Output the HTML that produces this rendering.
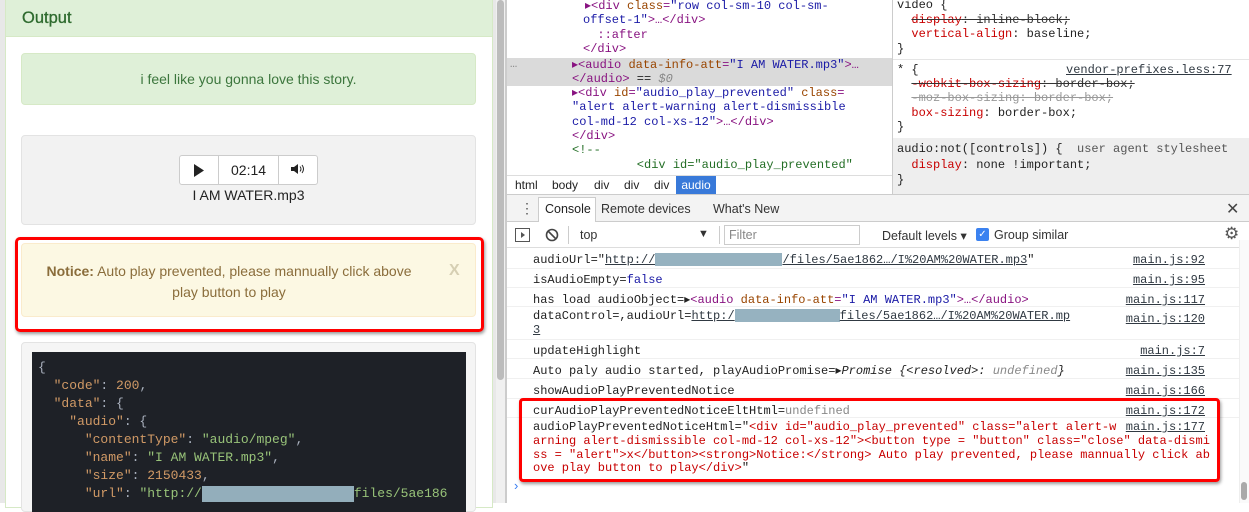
<!DOCTYPE html>
<html><head><meta charset="utf-8"><style>
*{box-sizing:border-box;margin:0;padding:0}
body{width:1249px;height:503px;overflow:hidden;position:relative;background:#fff;font-family:"Liberation Sans",sans-serif}
.a{position:absolute;white-space:pre}
.m{font-family:"Liberation Mono",monospace;font-size:12px;line-height:14px}
.e{font-family:"Liberation Mono",monospace;font-size:12px;line-height:14.3px}
.tag{color:#881280}.at{color:#994500}.av{color:#1a1aa6}.cm{color:#236e25}.pr{color:#c80000}
.st{text-decoration:line-through;color:#333}
.lk{text-decoration:underline;color:#303942}
.blur{background:#96b2c0;display:inline-block;height:13px;vertical-align:middle}
.c{font-family:"Liberation Mono",monospace;font-size:13px;line-height:18px;color:#abb2bf}
.k{color:#d19a66}.s{color:#98c379}
</style></head><body>
<!-- left page -->
<div class="a" style="left:0;top:0;width:505px;height:503px;background:#e8e8e8"></div>
<div class="a" style="left:5px;top:-2px;width:488px;height:510px;background:#fff;border:1px solid #d6e9c6"></div>
<div class="a" style="left:6px;top:0;width:486px;height:37px;background:#dff0d8;border-bottom:1px solid #d6e9c6"></div>
<div class="a" style="left:22px;top:9px;font-size:16.5px;color:#2f6b2f;-webkit-text-stroke:0.3px #2f6b2f">Output</div>
<div class="a" style="left:21px;top:53px;width:455px;height:52px;background:#dff0d8;border:1px solid #d6e9c6;border-radius:4px;color:#3c763d;font-size:14px;text-align:center;line-height:50px">i feel like you gonna love this story.</div>
<div class="a" style="left:21px;top:135px;width:455px;height:90px;background:#f2f2f2;border:1px solid #e3e3e3;border-radius:4px"></div>
<div class="a" style="left:179px;top:155px;width:139px;height:30px;background:#fff;border:1px solid #ccc;border-radius:3px"></div>
<div class="a" style="left:218px;top:155px;width:1px;height:30px;background:#ccc"></div>
<div class="a" style="left:278px;top:155px;width:1px;height:30px;background:#ccc"></div>
<svg class="a" style="left:193px;top:164px" width="12" height="13"><path d="M1 0L11 6.5L1 13Z" fill="#222"/></svg>
<div class="a" style="left:231px;top:162px;font-size:14px;color:#222">02:14</div>
<svg class="a" style="left:290px;top:163px" width="16" height="12"><path d="M1 4H4L8 1V11L4 8H1Z" fill="#222"/><path d="M10 3.5Q12 6 10 8.5M12 2Q15 6 12 10" stroke="#222" fill="none"/></svg>
<div class="a" style="left:0;width:497px;top:187px;text-align:center;font-size:14px;color:#222">I AM WATER.mp3</div>
<div class="a" style="left:15px;top:237px;width:469px;height:95px;border:3px solid #f00;border-radius:5px;box-shadow:1px 2px 3px rgba(0,0,0,.4)"></div>
<div class="a" style="left:21px;top:243px;width:455px;height:74px;background:#fcf8e3;border:1px solid #faebcc;border-radius:4px"></div>
<div class="a" style="left:21px;top:261px;width:455px;text-align:center;font-size:14px;line-height:21px;color:#8a6d3b;padding:0 43px 0 4px"><b>Notice:</b> Auto play prevented, please mannually click above<br>play button to play</div>
<div class="a" style="left:449px;top:262px;font-size:16px;font-weight:bold;color:#d6cfb3">X</div>
<div class="a" style="left:21px;top:342px;width:455px;height:170px;background:#f5f5f5;border:1px solid #e3e3e3;border-radius:4px"></div>
<div class="a c" style="left:32px;top:352px;width:434px;height:160px;background:#1e2127;padding:7px 0 0 6px">{
  <span class="k">"code"</span>: <span class="k">200</span>,
  <span class="k">"data"</span>: {
    <span class="k">"audio"</span>: {
      <span class="k">"contentType"</span>: <span class="s">"audio/mpeg"</span>,
      <span class="k">"name"</span>: <span class="s">"I AM WATER.mp3"</span>,
      <span class="k">"size"</span>: <span class="k">2150433</span>,
      <span class="k">"url"</span>: <span class="s">"http://<span class="blur" style="width:152px;height:16px;background:#93aebb"></span>files/5ae186</span></div>
<div class="a" style="left:496px;top:0;width:9px;height:503px;background:#f0f0f0"></div>
<div class="a" style="left:497px;top:0;width:7px;height:380px;background:#bcbcbc;border-radius:4px"></div>
<!-- devtools -->
<div class="a" style="left:505px;top:0;width:2px;height:503px;background:#ccc"></div>
<div class="a" style="left:507px;top:58px;width:385px;height:28px;background:#dadada"></div>
<div class="a e" style="left:585px;top:-1px;color:#222"><span class="tag">▸&lt;div </span><span class="at">class</span><span class="tag">=</span><span class="av">"row col-sm-10 col-sm-</span></div>
<div class="a e" style="left:583px;top:13.3px;color:#222"><span class="av">offset-1"</span><span class="tag">&gt;…&lt;/div&gt;</span>
  <span class="tag">::after</span>
<span class="tag">&lt;/div&gt;</span></div>
<div class="a e" style="left:510px;top:57px;color:#888">…</div>
<div class="a e" style="left:572px;top:57.5px;color:#222"><span class="tag">▸&lt;audio </span><span class="at">data-info-att</span><span class="tag">=</span><span class="av">"I AM WATER.mp3"</span><span class="tag">&gt;…</span>
<span class="tag">&lt;/audio&gt;</span> == <i style="color:#888">$0</i>
<span class="tag">▸&lt;div </span><span class="at">id</span><span class="tag">=</span><span class="av">"audio_play_prevented"</span> <span class="at">class</span><span class="tag">=</span>
<span class="av">"alert alert-warning alert-dismissible</span>
<span class="av">col-md-12 col-xs-12"</span><span class="tag">&gt;…&lt;/div&gt;</span>
<span class="tag">&lt;/div&gt;</span>
<span class="cm">&lt;!--</span>
<span class="cm">         &lt;div id="audio_play_prevented"</span></div>
<div class="a" style="left:507px;top:175px;width:385px;height:19px;background:#fff;border-top:1px solid #ddd"></div>
<div class="a" style="left:515px;top:178px;font-size:12px;color:#222">html</div>
<div class="a" style="left:552px;top:178px;font-size:12px;color:#222">body</div>
<div class="a" style="left:594px;top:178px;font-size:12px;color:#222">div</div>
<div class="a" style="left:624px;top:178px;font-size:12px;color:#222">div</div>
<div class="a" style="left:654px;top:178px;font-size:12px;color:#222">div</div>
<div class="a" style="left:676px;top:176px;width:40px;height:18px;background:#3879d9;color:#fff;font-size:12px;line-height:18px;text-align:center">audio</div>
<div class="a" style="left:892px;top:0;width:1px;height:194px;background:#ccc"></div>
<div class="a" style="left:893px;top:59px;width:356px;height:1px;background:#e5e5e5"></div>
<div class="a" style="left:893px;top:138px;width:356px;height:56px;background:#eee"></div>
<div class="a e" style="left:897px;top:-2px;color:#222;line-height:14.5px">video {
  <span class="st"><span style="color:#c80000">display</span>: inline-block;</span>
  <span class="pr">vertical-align</span>: baseline;
}</div>
<div class="a e" style="left:897px;top:63px;color:#222;line-height:14.2px">* {
  <span class="st"><span style="color:#c80000">-webkit-box-sizing</span>: border-box;</span>
  <span class="st" style="color:#999">-moz-box-sizing: border-box;</span>
  <span class="pr">box-sizing</span>: border-box;
}</div>
<div class="a e lk" style="left:1066px;top:63px">vendor-prefixes.less:77</div>
<div class="a e" style="left:897px;top:142px;color:#222;line-height:15.5px">audio:not([controls]) {  <span style="color:#555">user agent stylesheet</span>
  <span class="pr">display</span>: none !important;
}</div>
<!-- console -->
<div class="a" style="left:507px;top:194px;width:742px;height:28px;background:#f3f3f3;border-top:1px solid #ccc;border-bottom:1px solid #ccc"></div>
<div class="a" style="left:520px;top:200px;font-size:14px;color:#555">⋮</div>
<div class="a" style="left:538px;top:197px;width:58px;height:26px;background:#fff;border:1px solid #ccc;border-bottom:none"></div>
<div class="a" style="left:545px;top:202px;font-size:12.5px;color:#222">Console</div>
<div class="a" style="left:601px;top:202px;font-size:12.5px;color:#333">Remote devices</div>
<div class="a" style="left:713px;top:202px;font-size:12.5px;color:#333">What's New</div>
<div class="a" style="left:1226px;top:199px;font-size:16px;color:#444">✕</div>
<div class="a" style="left:507px;top:222px;width:742px;height:26px;background:#fff;border-bottom:1px solid #ddd"></div>
<div class="a" style="left:515px;top:228px;width:15px;height:14px;border:1px solid #555"></div>
<svg class="a" style="left:519px;top:231px" width="8" height="8"><path d="M2 1L6 4L2 7Z" fill="#555"/></svg>
<svg class="a" style="left:545px;top:228px" width="14" height="14"><circle cx="7" cy="7" r="5.5" stroke="#444" stroke-width="1.6" fill="none"/><path d="M3 3L11 11" stroke="#444" stroke-width="1.6"/></svg>
<div class="a" style="left:568px;top:226px;width:1px;height:18px;background:#ccc"></div>
<div class="a" style="left:580px;top:228px;font-size:12.5px;color:#333">top</div>
<div class="a" style="left:698px;top:228px;font-size:11px;color:#333">▼</div>
<div class="a" style="left:719px;top:226px;width:1px;height:18px;background:#ccc"></div>
<div class="a" style="left:724px;top:225px;width:136px;height:20px;border:1px solid #ccc"></div>
<div class="a" style="left:729px;top:228px;font-size:12.5px;color:#888">Filter</div>
<div class="a" style="left:882px;top:228px;font-size:12.5px;color:#333">Default levels ▾</div>
<div class="a" style="left:976px;top:228px;width:13px;height:13px;background:#3b82f0;border-radius:2px;color:#fff;font-size:10px;line-height:13px;text-align:center">✓</div>
<div class="a" style="left:994px;top:228px;font-size:12.5px;color:#333">Group similar</div>
<div class="a" style="left:1224px;top:224px;font-size:17px;color:#555">⚙</div>
<div class="a m" style="left:533px;top:250px;color:#222;line-height:20px">audioUrl="<span class="lk">http://<span class="blur" style="width:127px"></span>/files/5ae1862…/I%20AM%20WATER.mp3</span>"
isAudioEmpty=<span class="av">false</span>
has load audioObject=▸<span class="tag">&lt;audio </span><span class="at">data-info-att</span><span class="tag">=</span><span class="av">"I AM WATER.mp3"</span><span class="tag">&gt;…&lt;/audio&gt;</span></div>
<div class="a m" style="left:533px;top:309px;color:#222;line-height:14px">dataControl=,audioUrl=<span class="lk">http:/<span class="blur" style="width:105px"></span>files/5ae1862…/I%20AM%20WATER.mp
3</span></div>
<div class="a m" style="left:533px;top:341px;color:#222;line-height:20px">updateHighlight
Auto paly audio started, playAudioPromise=▸<i>Promise {&lt;resolved&gt;: <span style="color:#888">undefined</span>}</i>
showAudioPlayPreventedNotice
curAudioPlayPreventedNoticeEltHtml=<span style="color:#888">undefined</span></div>
<div class="a m" style="left:533px;top:421px;color:#222;line-height:13.8px">audioPlayPreventedNoticeHtml="<span class="pr">&lt;div id="audio_play_prevented" class="alert alert-w</span>
<span class="pr">arning alert-dismissible col-md-12 col-xs-12"&gt;&lt;button type = "button" class="close" data-dismi</span>
<span class="pr">ss = "alert"&gt;x&lt;/button&gt;&lt;strong&gt;Notice:&lt;/strong&gt; Auto play prevented, please mannually click ab</span>
<span class="pr">ove play button to play&lt;/div&gt;</span>"</div>
<div class="a m" style="left:1120px;top:250px;line-height:20px;text-align:right;width:85px"><span class="lk">main.js:92</span>
<span class="lk">main.js:95</span>
<span class="lk">main.js:117</span></div>
<div class="a m" style="left:1120px;top:309px;line-height:20px;text-align:right;width:85px"><span class="lk">main.js:120</span></div>
<div class="a m" style="left:1120px;top:341px;line-height:20px;text-align:right;width:85px"><span class="lk">main.js:7</span>
<span class="lk">main.js:135</span>
<span class="lk">main.js:166</span>
<span class="lk">main.js:172</span></div>
<div class="a m" style="left:1120px;top:421px;line-height:13.8px;text-align:right;width:85px"><span class="lk">main.js:177</span></div>
<div class="a" style="left:507px;top:268px;width:733px;height:1px;background:#f0f0f0"></div>
<div class="a" style="left:507px;top:287px;width:733px;height:1px;background:#f0f0f0"></div>
<div class="a" style="left:507px;top:306px;width:733px;height:1px;background:#f0f0f0"></div>
<div class="a" style="left:507px;top:339px;width:733px;height:1px;background:#f0f0f0"></div>
<div class="a" style="left:507px;top:358px;width:733px;height:1px;background:#f0f0f0"></div>
<div class="a" style="left:507px;top:378px;width:733px;height:1px;background:#f0f0f0"></div>
<div class="a" style="left:507px;top:398px;width:733px;height:1px;background:#f0f0f0"></div>
<div class="a" style="left:507px;top:417px;width:733px;height:1px;background:#f0f0f0"></div>
<div class="a" style="left:519px;top:398px;width:701px;height:84px;border:3px solid #f00;border-radius:4px;box-shadow:1px 2px 3px rgba(0,0,0,.4)"></div>
<div class="a" style="left:514px;top:478px;font-size:13px;color:#367cf1">›</div>
<div class="a" style="left:1239px;top:240px;width:10px;height:263px;background:#fafafa;border-left:1px solid #eee"></div>
<div class="a" style="left:1241px;top:482px;width:6px;height:18px;background:#aaa;border-radius:3px"></div>
</body></html>
